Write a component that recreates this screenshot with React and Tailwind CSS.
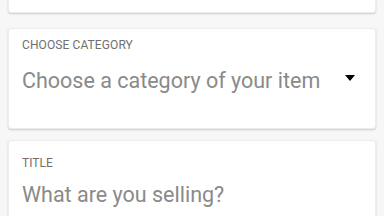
const Card = ({ className = '', children }) => (
  <div
    className={`mx-2 bg-white rounded-[3px] border border-[#ececec] shadow-[0_1px_2px_rgba(0,0,0,0.18)] ${className}`}
  >
    {children}
  </div>
);

export default function App() {
  return (
    <div
      className="w-[384px] h-[216px] overflow-hidden bg-[#f7f7f7]"
      style={{ fontFamily: 'Roboto, "Noto Sans", sans-serif' }}
    >
      <div className="flex flex-col">
        <Card className="mt-[-40px] h-[53px]" />

        <Card className="mt-[15px] h-[101px] pl-[13px] pr-[20px] pt-[10px]">
          <div className="text-[12px] leading-[13px] text-[#707070] tracking-[0.1px]">CHOOSE CATEGORY</div>
          <div className="mt-[17px] flex items-center justify-between">
            <span className="text-[21.5px] leading-[24px] text-[#8a8a8a]">Choose a category of your item</span>
            <span className="mb-[7px] w-0 h-0 border-l-[5px] border-r-[5px] border-t-[6px] border-l-transparent border-r-transparent border-t-black" />
          </div>
        </Card>

        <Card className="mt-[11px] h-[120px] pl-[13px] pt-[16px]">
          <div className="text-[12px] leading-[13px] text-[#707070]">TITLE</div>
          <div className="mt-[13px] text-[21.5px] leading-[24px] text-[#8a8a8a]">What are you selling?</div>
        </Card>
      </div>
    </div>
  );
}
